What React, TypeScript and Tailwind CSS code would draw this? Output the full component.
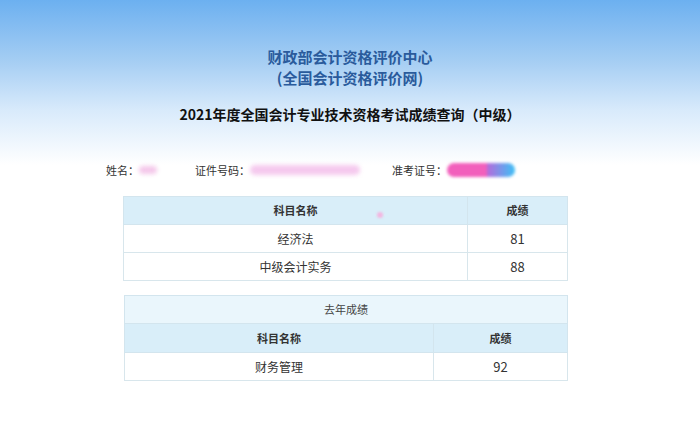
const font = { fontFamily: '"Microsoft YaHei", "Noto Sans CJK SC", sans-serif' };

type Row = { name: string; score: number };

const current: Row[] = [
  { name: "经济法", score: 81 },
  { name: "中级会计实务", score: 88 },
];

const lastYear: Row[] = [{ name: "财务管理", score: 92 }];

function Blur({ className }: { className: string }) {
  return <span className={`inline-block rounded-full blur-[2px] ${className}`} />;
}

export default function App() {
  return (
    <div
      className="w-[700px] h-[447px] bg-[linear-gradient(to_bottom,#6cb0f0_0px,#a4cdf3_60px,#d8eafb_110px,#ffffff_165px)] text-[#333]"
      style={font}
    >
      {/* Header */}
      <div className="pt-[46px] flex flex-col items-center">
        <p className="text-[15px] font-bold leading-[21px] text-[#2a5b9c]">财政部会计资格评价中心</p>
        <p className="text-[15px] font-bold leading-[21px] text-[#2a5b9c]">(全国会计资格评价网)</p>
        <h1 className="mt-[16px] text-[14px] font-bold leading-[20px] text-[#111]">
          2021年度全国会计专业技术资格考试成绩查询（中级）
        </h1>
      </div>

      {/* Info */}
      <div className="mt-[38px] flex items-center text-[11px] text-[#333] h-[16px]">
        <div className="ml-[106px] flex items-center">
          姓名：
          <Blur className="w-[18px] h-[8px] bg-[#f4c7ea]" />
        </div>
        <div className="ml-[38px] flex items-center">
          证件号码：
          <Blur className="w-[110px] h-[10px] bg-[#f5c9ee]" />
        </div>
        <div className="ml-[32px] flex items-center">
          准考证号：
          <span className="inline-flex blur-[1.5px]">
            <span className="w-[40px] h-[14px] rounded-l-full bg-[#f25fbc]" />
            <span className="w-[28px] h-[14px] rounded-r-full bg-[linear-gradient(to_right,#b46bdc,#3cc0f6)]" />
          </span>
        </div>
      </div>

      {/* Current scores */}
      <table className="mt-[18px] ml-[123px] w-[445px] border-collapse text-center">
        <thead>
          <tr className="h-[28px] bg-[#d9eef9] text-[11px] font-bold text-[#333]">
            <th className="border border-[#d3e5ee] w-[344px] relative">
              科目名称
              <span className="absolute left-[253px] top-[15px] w-[6px] h-[6px] rounded-full bg-[#f3b6e1] blur-[1px]" />
            </th>
            <th className="border border-[#d3e5ee]">成绩</th>
          </tr>
        </thead>
        <tbody>
          {current.map((r) => (
            <tr key={r.name} className="h-[28px]">
              <td className="border border-[#d8e6ec] text-[12px]">{r.name}</td>
              <td className="border border-[#d8e6ec] text-[13px]">{r.score}</td>
            </tr>
          ))}
        </tbody>
      </table>

      {/* Last year */}
      <table className="mt-[14px] ml-[124px] w-[444px] border-collapse text-center">
        <thead>
          <tr className="h-[28px] bg-[#eaf6fc] text-[11px] text-[#444]">
            <th colSpan={2} className="border border-[#d3e5ee] font-normal">去年成绩</th>
          </tr>
          <tr className="h-[29px] bg-[#d9eef9] text-[11px] font-bold text-[#333]">
            <th className="border border-[#d3e5ee] w-[309px]">科目名称</th>
            <th className="border border-[#d3e5ee]">成绩</th>
          </tr>
        </thead>
        <tbody>
          {lastYear.map((r) => (
            <tr key={r.name} className="h-[28px]">
              <td className="border border-[#d8e6ec] text-[12px]">{r.name}</td>
              <td className="border border-[#d8e6ec] text-[13px]">{r.score}</td>
            </tr>
          ))}
        </tbody>
      </table>
    </div>
  );
}
